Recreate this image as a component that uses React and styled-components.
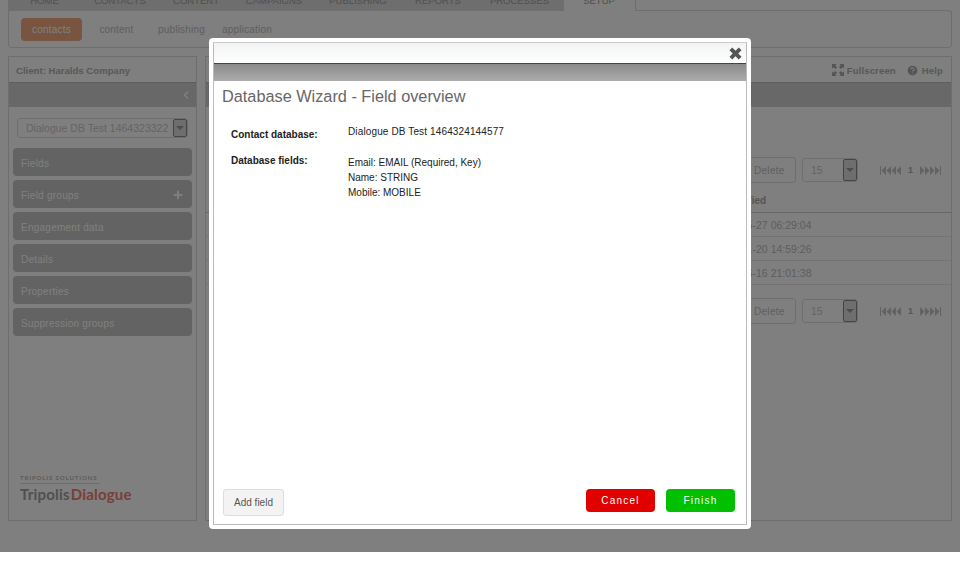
import React from "react";
import styled, { createGlobalStyle } from "styled-components";
import { ChevronLeft, Plus, CircleHelp } from "lucide-react";

const Global = createGlobalStyle`
  html, body {
    margin: 0;
    padding: 0;
    background: #fff;
    overflow: hidden;
  }
  body {
    font-family: "Liberation Sans", Arial, sans-serif;
  }
`;

const Screen = styled.div`
  position: relative;
  width: 960px;
  height: 552px;
  overflow: hidden;
  background: #fff;
`;

const Page = styled.div`
  display: flex;
  flex-direction: column;
  height: 552px;
  box-sizing: border-box;
  padding-bottom: 31px;
`;

const TabBar = styled.div`
  display: flex;
  height: 11px;
  overflow: hidden;
  padding-left: 8px;
  flex: none;
`;

const Tab = styled.div`
  flex: none;
  height: 11px;
  width: ${(p) => p.$w}px;
  text-align: center;
  font-size: 9.5px;
  line-height: 10px;
  color: #a0a0a0;
  white-space: nowrap;
  background: ${(p) => (p.$active ? "#fff" : "#dcdcdc")};
  box-sizing: border-box;
  & > span {
    display: block;
    margin-top: -4px;
  }
`;

const TabEnd = styled.div`
  flex: none;
  width: 1px;
  margin-left: 1px;
  background: #ddd;
`;

const SubNav = styled.div`
  display: flex;
  align-items: center;
  height: 37px;
  margin: 0 8px 8px;
  padding-left: 12px;
  border: 1px solid #ddd;
  border-top: 0;
  border-radius: 0 0 4px 4px;
  box-sizing: border-box;
  flex: none;
  position: relative;
  &::after {
    content: "";
    position: absolute;
    right: -1px;
    top: -1px;
    left: 626px;
    height: 6px;
    border-top: 1px solid #ddd;
    border-right: 1px solid #ddd;
    border-top-right-radius: 5px;
  }
`;

const SubItem = styled.div`
  font-size: 10px;
  letter-spacing: 0.2px;
  color: ${(p) => (p.$active ? "#fff" : "#bbb")};
  background: ${(p) => (p.$active ? "#f0a982" : "transparent")};
  border-radius: 4px;
  height: 23px;
  line-height: 24px;
  width: ${(p) => p.$w}px;
  margin-right: ${(p) => p.$mr}px;
  text-align: center;
  white-space: nowrap;
  flex: none;
`;

const Columns = styled.div`
  flex: 1;
  display: flex;
  gap: 8px;
  margin: 0 8px;
  min-height: 0;
`;

const Panel = styled.div`
  border: 1px solid #ddd;
  box-sizing: border-box;
  display: flex;
  flex-direction: column;
  min-width: 0;
  width: ${(p) => p.$w || "auto"};
  flex: ${(p) => (p.$grow ? 1 : "none")};
`;

const PanelHead = styled.div`
  height: 25px;
  flex: none;
  display: flex;
  align-items: center;
  justify-content: space-between;
  padding: 1px 7px 0;
  box-sizing: border-box;
  font-size: 9.6px;
  font-weight: bold;
  color: #b0b0b0;
`;

const DarkBar = styled.div`
  height: 25px;
  flex: none;
  background: #d0d0d0;
  border-top: 1px solid #bbb;
  box-sizing: border-box;
  display: flex;
  align-items: center;
  justify-content: flex-end;
  padding-right: 4px;
  color: #fff;
`;

const SideBody = styled.div`
  flex: 1;
  display: flex;
  flex-direction: column;
  padding: 11px 4px 0;
  min-height: 0;
`;

const SelectBox = styled.div`
  display: flex;
  align-items: center;
  height: ${(p) => p.$h || 20}px;
  width: ${(p) => p.$w}px;
  margin: ${(p) => p.$m || "0"};
  border: 1px solid #ddd;
  border-radius: 3px;
  box-sizing: border-box;
  overflow: hidden;
  flex: none;
  background: #fff;
`;

const SelectText = styled.div`
  flex: 1;
  min-width: 0;
  margin: 0 5px 0 8px;
  overflow: hidden;
  white-space: nowrap;
  font-size: 10.5px;
  color: #c8c8c8;
`;

const SelectArrow = styled.div`
  width: 14px;
  align-self: stretch;
  flex: none;
  border: 1px solid #888;
  border-radius: 2px;
  box-sizing: border-box;
  background: #ddd;
  display: flex;
  align-items: center;
  justify-content: center;
  &::after {
    content: "";
    border: 4px solid transparent;
    border-top: 4px solid #999;
    border-bottom: 0;
  }
`;

const MenuList = styled.div`
  display: flex;
  flex-direction: column;
  gap: 4px;
  margin-top: 10px;
`;

const MenuItem = styled.div`
  height: 28px;
  background: #c6c6c6;
  border-radius: 4px;
  display: flex;
  align-items: center;
  justify-content: space-between;
  padding: 2px 8px 0;
  box-sizing: border-box;
  font-size: 10px;
  letter-spacing: 0.25px;
  color: #fff;
`;

const Logo = styled.div`
  margin: auto 0 17px 7px;
`;

const LogoSmall = styled.div`
  font-family: "Lato", sans-serif;
  font-size: 6px;
  letter-spacing: 0.9px;
  font-weight: 700;
  color: #b8b8b8;
  border-bottom: 1px solid #ddd;
  width: 80px;
  padding-bottom: 2px;
  white-space: nowrap;
`;

const LogoBig = styled.div`
  font-family: "Lato", sans-serif;
  font-size: 15px;
  font-weight: 700;
  margin-top: 1px;
  color: #a0a0a0;
  letter-spacing: 0.2px;
  & > span {
    color: #f08070;
    margin-left: 1px;
  }
`;

const HeadTools = styled.div`
  display: flex;
  align-items: center;
  gap: 10px;
  margin-left: auto;
  margin-right: 1px;
`;

const HeadTool = styled.div`
  display: flex;
  align-items: center;
  gap: 3px;
  font-size: 9.6px;
  letter-spacing: 0.1px;
  color: #b0b0b0;
`;

const MainBody = styled.div`
  flex: 1;
  display: flex;
  flex-direction: column;
  align-items: flex-end;
  padding-top: 50px;
  min-height: 0;
`;

const Toolbar = styled.div`
  display: flex;
  align-items: center;
  height: 26px;
  padding-right: 10px;
  margin-top: ${(p) => p.$mt || 0}px;
`;

const GhostButton = styled.div`
  width: 56px;
  height: 26px;
  line-height: 26px;
  border: 1px solid #ddd;
  border-radius: 3px;
  box-sizing: border-box;
  margin-right: 6px;
  padding-left: 13px;
  font-size: 10px;
  letter-spacing: 0.3px;
  color: #c0c0c0;
  white-space: nowrap;
`;

const Pager = styled.div`
  display: flex;
  align-items: center;
  margin-left: 22px;
  gap: 6px;
  font-size: 9px;
  font-weight: bold;
  color: #aaa;
`;

const PagerGlyph = styled.svg`
  display: block;
  transform: ${(p) => (p.$flip ? "scaleX(-1)" : "none")};
`;

const Table = styled.div`
  align-self: stretch;
  margin-top: 5px;
`;

const HeadRow = styled.div`
  height: 25px;
  border-bottom: 1px solid #ccc;
  box-sizing: border-box;
  display: flex;
  align-items: center;
  padding-left: 519px;
  font-size: 10px;
  font-weight: bold;
  color: #aaa;
`;

const Row = styled.div`
  height: 24px;
  border-bottom: 1px solid #e6e6e6;
  box-sizing: border-box;
  display: flex;
  align-items: center;
  padding-left: 508px;
  font-size: 10.5px;
  color: #bbb;
`;

const Overlay = styled.div`
  position: absolute;
  inset: 0;
  background: rgba(0, 0, 0, 0.5);
`;

const Modal = styled.div`
  position: absolute;
  left: 209px;
  top: 38px;
  width: 542px;
  height: 491px;
  box-sizing: border-box;
  background: #fff;
  border-radius: 4px;
  padding: 4px;
  display: flex;
`;

const ModalInner = styled.div`
  flex: 1;
  border: 1px solid #bbb;
  border-top-color: #ccc;
  display: flex;
  flex-direction: column;
  min-width: 0;
`;

const ModalTop = styled.div`
  height: 20px;
  flex: none;
  background: linear-gradient(#f1f3f5, #fff);
  border-bottom: 1px solid #444;
  display: flex;
  justify-content: flex-end;
  align-items: center;
  padding-right: 4px;
`;

const ModalStrip = styled.div`
  height: 17px;
  flex: none;
  background: linear-gradient(#8a8a8a, #acacac);
`;

const ModalBody = styled.div`
  flex: 1;
  display: flex;
  flex-direction: column;
  min-height: 0;
  padding: 0 11px 8px 8px;
`;

const Title = styled.h1`
  margin: 5px 0 0;
  font-size: 16.3px;
  line-height: 20px;
  font-weight: normal;
  color: #666;
`;

const InfoRow = styled.div`
  display: flex;
  margin-top: ${(p) => p.$mt}px;
  font-size: 10px;
  color: #222;
`;

const InfoLabel = styled.div`
  width: 126px;
  flex: none;
  box-sizing: border-box;
  padding-left: 9px;
  padding-top: ${(p) => p.$pt || 0}px;
  margin-top: ${(p) => p.$mt || 0}px;
  font-weight: bold;
  line-height: 13px;
`;

const InfoValue = styled.div`
  line-height: 15px;
  letter-spacing: ${(p) => (p.$wide ? "0.13px" : "0")};
`;

const ModalFooter = styled.div`
  margin-top: auto;
  display: flex;
  align-items: flex-end;
  gap: 11px;
`;

const AddButton = styled.div`
  width: 61px;
  height: 27px;
  line-height: 26px;
  margin: 0 auto 0 1px;
  box-sizing: border-box;
  background: #f3f3f3;
  border: 1px solid #ddd;
  border-radius: 3px;
  text-align: center;
  font-size: 10px;
  color: #555;
`;

const ActionButton = styled.div`
  width: 69px;
  height: 23px;
  line-height: 24px;
  margin-bottom: 4px;
  border-radius: 4px;
  text-align: center;
  font-size: 10px;
  letter-spacing: 1.2px;
  color: #fff;
  background: ${(p) => p.$bg};
`;

const ExpandIcon = () => (
  <svg width="12" height="12" viewBox="0 0 13 13" fill="#aaa">
    <path d="M0 0h5L3.6 1.6 5.4 3.4 3.4 5.4 1.6 3.6 0 5zM13 0v5l-1.6-1.4-1.8 1.8-2-2 1.8-1.8L8 0zM0 13V8l1.6 1.4 1.8-1.8 2 2-1.8 1.8L5 13zM13 13H8l1.4-1.6-1.8-1.8 2-2 1.8 1.8L13 8z" />
  </svg>
);

const PagerIcon = ({ flip }) => (
  <PagerGlyph $flip={flip} width="22" height="9" viewBox="0 0 22 9" fill="#c4c4c4">
    <path d="M0 0h1v9H0zM6 0v9L1.5 4.5zM11 0v9L6.5 4.5zM16 0v9l-4.5-4.5zM21 0v9l-4.5-4.5z" />
  </PagerGlyph>
);

const CloseIcon = () => (
  <svg width="13" height="13" viewBox="0 0 14 14" fill="none" stroke="#555" strokeWidth="4.2">
    <path d="M2 2l10 10M12 2L2 12" />
  </svg>
);

const Tools = ({ mt }) => (
  <Toolbar $mt={mt}>
    <GhostButton>Delete</GhostButton>
    <SelectBox $w={56} $h={24}>
      <SelectText>15</SelectText>
      <SelectArrow />
    </SelectBox>
    <Pager>
      <PagerIcon />
      1
      <PagerIcon flip />
    </Pager>
  </Toolbar>
);

const tabs = [
  ["HOME", 73],
  ["CONTACTS", 78],
  ["CONTENT", 74],
  ["CAMPAIGNS", 82],
  ["PUBLISHING", 86],
  ["REPORTS", 74],
  ["PROCESSES", 89],
  ["SETUP", 70, true],
];

const menu = ["Fields", "Field groups", "Engagement data", "Details", "Properties", "Suppression groups"];
const dates = ["2016-05-27 06:29:04", "2016-01-20 14:59:26", "2015-06-16 21:01:38"];

export default function App() {
  return (
    <>
      <Global />
      <Screen>
        <Page>
          <TabBar>
            {tabs.map(([name, w, active]) => (
              <Tab key={name} $w={w} $active={active}>
                <span>{name}</span>
              </Tab>
            ))}
            <TabEnd />
          </TabBar>
          <SubNav>
            <SubItem $active $w={61} $mr={10}>contacts</SubItem>
            <SubItem $w={49} $mr={16}>content</SubItem>
            <SubItem $w={49} $mr={16}>publishing</SubItem>
            <SubItem $w={49} $mr={0}>application</SubItem>
          </SubNav>
          <Columns>
            <Panel $w="189px">
              <PanelHead>Client: Haralds Company</PanelHead>
              <DarkBar>
                <ChevronLeft size={12} strokeWidth={3} />
              </DarkBar>
              <SideBody>
                <SelectBox $w={171} $m="0 0 0 4px">
                  <SelectText>Dialogue DB Test 1464323322001</SelectText>
                  <SelectArrow />
                </SelectBox>
                <MenuList>
                  {menu.map((m) => (
                    <MenuItem key={m}>
                      {m}
                      {m === "Field groups" && <Plus size={12} strokeWidth={4} />}
                    </MenuItem>
                  ))}
                </MenuList>
                <Logo>
                  <LogoSmall>TRIPOLIS SOLUTIONS</LogoSmall>
                  <LogoBig>
                    Tripolis<span>Dialogue</span>
                  </LogoBig>
                </Logo>
              </SideBody>
            </Panel>
            <Panel $grow>
              <PanelHead>
                <HeadTools>
                  <HeadTool>
                    <ExpandIcon />
                    Fullscreen
                  </HeadTool>
                  <HeadTool>
                    <CircleHelp size={13} fill="#aaa" color="#fff" />
                    Help
                  </HeadTool>
                </HeadTools>
              </PanelHead>
              <DarkBar />
              <MainBody>
                <Tools />
                <Table>
                  <HeadRow>Modified</HeadRow>
                  {dates.map((d) => (
                    <Row key={d}>{d}</Row>
                  ))}
                </Table>
                <Tools mt={13} />
              </MainBody>
            </Panel>
          </Columns>
        </Page>
        <Overlay />
        <Modal>
          <ModalInner>
            <ModalTop>
              <CloseIcon />
            </ModalTop>
            <ModalStrip />
            <ModalBody>
              <Title>Database Wizard - Field overview</Title>
              <InfoRow $mt={18}>
                <InfoLabel $pt={4}>Contact database:</InfoLabel>
                <InfoValue $wide>Dialogue DB Test 1464324144577</InfoValue>
              </InfoRow>
              <InfoRow $mt={14}>
                <InfoLabel $mt={-1}>Database fields:</InfoLabel>
                <InfoValue>
                  Email: EMAIL (Required, Key)
                  <br />
                  Name: STRING
                  <br />
                  Mobile: MOBILE
                </InfoValue>
              </InfoRow>
              <ModalFooter>
                <AddButton>Add field</AddButton>
                <ActionButton $bg="#e00000">Cancel</ActionButton>
                <ActionButton $bg="#00c000">Finish</ActionButton>
              </ModalFooter>
            </ModalBody>
          </ModalInner>
        </Modal>
      </Screen>
    </>
  );
}
